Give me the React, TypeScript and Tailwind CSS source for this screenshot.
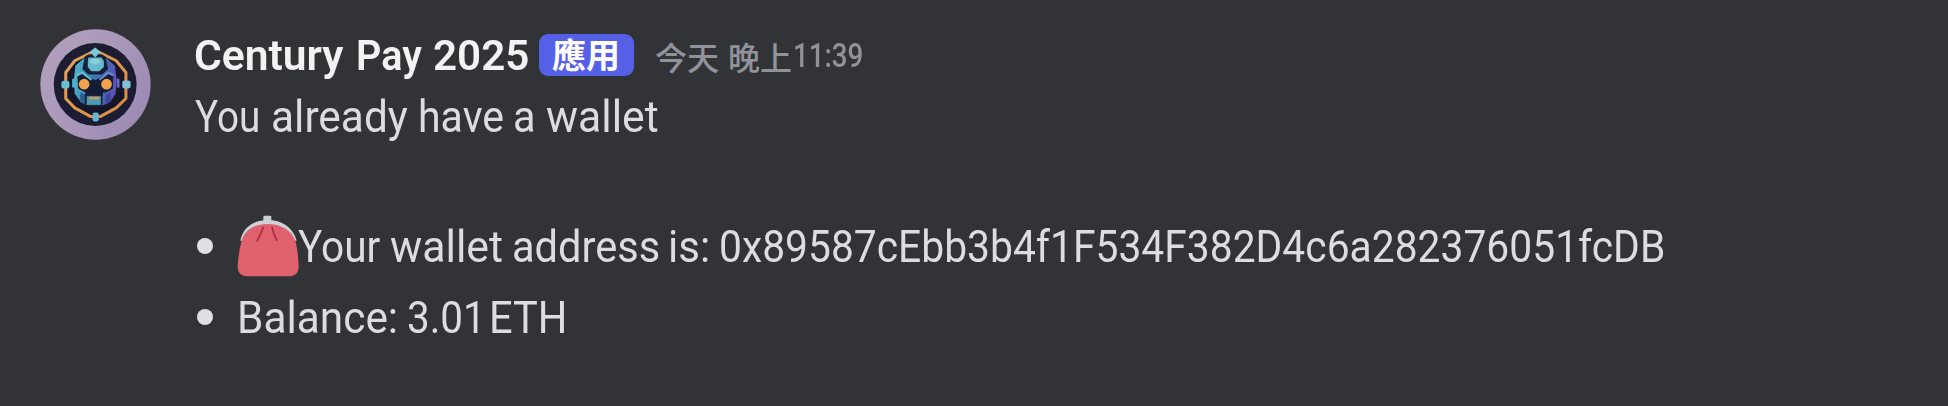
import React from "react";

type WordProps = { children: string; className: string };

function Word({ children, className }: WordProps) {
  return (
    <span className={`block shrink-0 origin-left whitespace-nowrap ${className}`}>{children}</span>
  );
}

function Avatar() {
  return (
    <svg viewBox="30 28 332 332" className="h-[111px] w-[111px] shrink-0" aria-hidden="true">
      <defs>
        <linearGradient id="ring" x1="0" y1="0" x2="1" y2="0.6">
          <stop offset="0" stopColor="#b3a2bd" />
          <stop offset="0.6" stopColor="#a897b8" />
          <stop offset="1" stopColor="#9c8bb4" />
        </linearGradient>
        <linearGradient id="face" x1="0" y1="0" x2="1" y2="0.2">
          <stop offset="0" stopColor="#58bcd0" />
          <stop offset="0.5" stopColor="#3a7fae" />
          <stop offset="1" stopColor="#5a55b5" />
        </linearGradient>
        <linearGradient id="frame" x1="0" y1="0" x2="1" y2="1">
          <stop offset="0" stopColor="#e2a45c" />
          <stop offset="1" stopColor="#dc8a3e" />
        </linearGradient>
        <filter id="soft" x="-5%" y="-5%" width="110%" height="110%">
          <feGaussianBlur stdDeviation="2" />
        </filter>
      </defs>
      <circle cx="196" cy="194" r="165" fill="url(#ring)" />
      <g filter="url(#soft)">
        <circle cx="195" cy="194" r="124" fill="#1b1d33" />
        <path
          d="M182 99 L134 123 L107 158 V236 L134 264 L182 290 H210 L258 264 L287 236 V158 L258 123 L210 99 Z"
          fill="#12162a"
          stroke="url(#frame)"
          strokeWidth="9"
          strokeLinejoin="round"
        />
        <path
          d="M160 116 L136 138 L131 182 L134 222 L152 247 L172 256 H218 L240 246 L256 222 L260 182 L254 138 L230 116 Z"
          fill="url(#face)"
        />
        <path d="M164 110 L174 104 H216 L226 110 L234 148 L216 164 H174 L157 148 Z" fill="#17203a" />
        <path d="M175 113 H214 L221 124 V142 L207 154 H183 L173 142 V124 Z" fill="#68b9cd" />
        <path d="M184 118 H206 L211 128 L195 134 L178 128 Z" fill="#8bd0da" />
        <path d="M142 170 L158 160 L192 180 H198 L232 160 L249 170 L248 206 L228 218 H218 V228 H166 V218 L144 206 Z" fill="#151c34" />
        <path d="M140 166 L156 159 L184 180" fill="none" stroke="#62c3d6" strokeWidth="6" />
        <path d="M250 166 L234 159 L208 180" fill="none" stroke="#6c8fd6" strokeWidth="6" />
        <circle cx="162" cy="193" r="16" fill="#f2a24c" />
        <circle cx="229" cy="193" r="16" fill="#f2a24c" />
        <path d="M152 218 L166 226 V256 L148 240 Z" fill="#2f5f8c" />
        <path d="M240 218 L226 226 V256 L244 240 Z" fill="#3f459c" />
        <path d="M164 222 H217 V252 L210 260 H172 L164 252 Z" fill="#18233c" />
        <path d="M170 229 H212 V255 H170 Z" fill="#4d9bb5" />
        <path d="M177 231 H207 V238 H177 Z" fill="#d99654" />
        <rect x="126" y="176" width="8" height="28" rx="4" fill="#4cb2cc" />
        <rect x="260" y="176" width="8" height="28" rx="4" fill="#6a64c4" />
        <path d="M195 86 L208 96 L195 110 L182 96 Z" fill="#7cc9dc" stroke="#7cc9dc" strokeWidth="4" />
        <rect x="94" y="183" width="24" height="23" rx="7" fill="#66bfd6" />
        <rect x="276" y="182" width="25" height="24" rx="7" fill="#7fbfdc" />
        <rect x="187" y="278" width="19" height="27" rx="7" fill="#62b6d2" />
      </g>
    </svg>
  );
}

function Purse() {
  return (
    <svg viewBox="170 45 186 186" className="mr-[-1px] h-[62px] w-[62px] shrink-0" aria-hidden="true">
      <rect x="249" y="47" width="24" height="26" rx="4" fill="#c9cdd1" />
      <path d="M180 122 C188 80 222 60 262 60 C304 60 338 82 349 122 Z" fill="#ccd2d5" />
      <path
        d="M184 122 C194 88 225 72 262 72 C299 72 334 90 345 122 C351 144 354 172 355 200 C355 219 344 229 322 229 H205 C183 229 172 219 172 200 C173 172 178 144 184 122 Z"
        fill="#de616d"
      />
      <path d="M249 82 C243 96 238 110 230 123 M275 82 C279 98 283 110 289 121" fill="none" stroke="#b2283c" strokeWidth="5" strokeLinecap="round" />
    </svg>
  );
}

function Bullet() {
  return <span className="mr-6 block h-4 w-4 shrink-0 rounded-full bg-[#dfe0e4]" />;
}

export default function App() {
  return (
    <main className="flex h-[406px] w-full items-start overflow-hidden bg-[#323337] pl-10 font-['Roboto','Noto_Sans_CJK_TC',sans-serif] text-[44px] text-[#dcdde1]">
      <div className="pt-[29px]">
        <Avatar />
      </div>
      <article className="pt-[25px] pl-[43px]">
        <header className="flex h-[60px] leading-[60px]">
          <Word className="w-[162px] scale-x-[0.99] text-[43px] font-semibold text-[#f3f3f5]">Century</Word>
          <Word className="w-[77px] scale-x-[0.92] text-[43px] font-semibold text-[#f3f3f5]">Pay</Word>
          <Word className="w-[106px] scale-x-[0.98] text-[43px] font-semibold text-[#f3f3f5]">2025</Word>
          <span className="mt-[9px] mr-[21px] block h-[42px] w-[95px] rounded-[9px] bg-[#5660e6] pl-[13px] font-['Noto_Sans_CJK_TC',sans-serif] text-[34px] leading-[40px] font-bold text-white">
            應用
          </span>
          <time className="flex pt-px font-['Noto_Sans_CJK_TC',sans-serif] text-[32px] font-medium text-[#90939a]">
            <span className="block w-[73px]">今天</span>
            <span className="block w-[65px]">晚上</span>
            <Word className="scale-x-[0.84] font-['Roboto',sans-serif] text-[33px]">11:39</Word>
          </time>
        </header>
        <p className="flex h-[60px] pt-[2px] pl-px leading-[60px]">
          <Word className="w-[76px] scale-x-[0.878]">You</Word>
          <Word className="w-[147px] scale-x-[0.964]">already</Word>
          <Word className="w-[95px] scale-x-[0.933]">have</Word>
          <Word className="w-[33px] scale-x-[0.943]">a</Word>
          <Word className="scale-x-[0.97]">wallet</Word>
        </p>
        <ul className="mt-[65px] pl-[3px] leading-[71px]">
          <li className="flex h-[71px] items-center">
            <Bullet />
            <Purse />
            <div className="flex pt-[4px]">
              <Word className="w-[92px] scale-x-[0.922]">Your</Word>
              <Word className="w-[122px] scale-x-[0.974]">wallet</Word>
              <Word className="w-[156px] scale-x-[0.945]">address</Word>
              <Word className="w-[51px] scale-x-[0.956]">is:</Word>
              <Word className="scale-x-[0.927]">0x89587cEbb3b4f1F534F382D4c6a282376051fcDB</Word>
            </div>
          </li>
          <li className="flex h-[71px] items-center">
            <Bullet />
            <div className="flex pt-[4px]">
              <Word className="w-[170px] scale-x-[0.963]">Balance:</Word>
              <Word className="w-[82px] scale-x-[0.918]">3.01</Word>
              <Word className="scale-x-[0.945]">ETH</Word>
            </div>
          </li>
        </ul>
      </article>
    </main>
  );
}
